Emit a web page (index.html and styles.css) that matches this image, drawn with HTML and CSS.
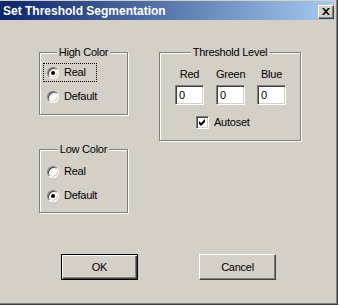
FILE: index.html
```html
<!DOCTYPE html>
<html lang="en">
<head>
    <meta charset="UTF-8">
    <title>Set Threshold Segmentation</title>
    <link rel="stylesheet" href="styles.css">
</head>
<body>
    <div class="window">
        <div class="titlebar">
            <span class="title">Set Threshold Segmentation</span>
            <span class="close">
                <svg width="8" height="7" viewBox="0 0 8 7">
                    <path d="M0 0h2l2 2.2 2-2.2h2l-3 3.5 3 3.5h-2l-2-2.2-2 2.2h-2l3-3.5z" fill="#000"/>
                </svg>
            </span>
        </div>

        <div class="content">
            <div class="left-col">
                <div class="group">
                    <div class="legend"><span>High Color</span></div>
                    <div class="option focus"><span class="radio checked"></span>Real</div>
                    <div class="option"><span class="radio"></span>Default</div>
                </div>
                <div class="group group-low">
                    <div class="legend"><span>Low Color</span></div>
                    <div class="option"><span class="radio"></span>Real</div>
                    <div class="option"><span class="radio checked"></span>Default</div>
                </div>
            </div>

            <div class="group thresh">
                <div class="legend"><span>Threshold Level</span></div>
                <div class="levels">
                    <span class="lvl-label">Red</span>
                    <span class="lvl-label">Green</span>
                    <span class="lvl-label">Blue</span>
                    <input class="field" type="text" value="0">
                    <input class="field" type="text" value="0">
                    <input class="field" type="text" value="0">
                </div>
                <div class="autoset">
                    <span class="checkbox">
                        <svg width="7" height="7" viewBox="0 0 7 7">
                            <path d="M0 2l2 2 4-4v3l-4 4-2-2z" fill="#000"/>
                        </svg>
                    </span>
                    Autoset
                </div>
            </div>
        </div>

        <div class="actions">
            <button class="btn btn-default">OK</button>
            <button class="btn">Cancel</button>
        </div>
    </div>
</body>
</html>
```

FILE: styles.css
```css
html, body {
    margin: 0;
    background: #fff;
}

body {
    font-family: "Liberation Sans", Arial, sans-serif;
    font-size: 11px;
    letter-spacing: -0.25px;
    color: #000;
}

.window {
    width: 338px;
    height: 305px;
    box-sizing: border-box;
    background: #d4d0c8;
    border-right: 1px solid #404040;
    border-bottom: 1px solid #404040;
    box-shadow: inset -1px -1px 0 #808080;
    padding-top: 1px;
}

.titlebar {
    width: 334px;
    height: 19px;
    box-sizing: border-box;
    padding-top: 2px;
    display: flex;
    justify-content: space-between;
    align-items: flex-start;
    background: linear-gradient(to right, #0a246a, #a6caf0);
}

.title {
    padding-left: 3px;
    color: #fff;
    font-size: 12px;
    font-weight: bold;
    line-height: 17px;
    letter-spacing: 0;
}

.close {
    width: 16px;
    height: 14px;
    margin-top: 2px;
    box-sizing: border-box;
    display: flex;
    align-items: center;
    justify-content: center;
    padding: 0 1px 1px 0;
    background: #d4d0c8;
    border: 1px solid;
    border-color: #fff #404040 #404040 #fff;
    box-shadow: inset -1px -1px 0 #808080;
}

.close svg {
    display: block;
}

.content {
    display: flex;
    gap: 31px;
    padding: 32px 0 0 39px;
}

.left-col {
    display: flex;
    flex-direction: column;
    gap: 34px;
}

.group {
    position: relative;
    width: 89px;
    height: 63px;
    box-sizing: border-box;
    padding: 10px 0 0 3px;
    border: 1px solid #808080;
    box-shadow: inset 1px 1px 0 #fff, 1px 1px 0 #fff;
    display: flex;
    flex-direction: column;
    gap: 5px;
}

.group-low {
    height: 64px;
    padding-top: 12px;
}

.legend {
    position: absolute;
    top: -7px;
    left: 0;
    right: 0;
    text-align: center;
    line-height: 13px;
}

.legend span {
    background: #d4d0c8;
    padding: 0 2px;
}

.option {
    width: 54px;
    height: 19px;
    box-sizing: border-box;
    padding-left: 3px;
    border: 1px dotted transparent;
    display: flex;
    align-items: center;
    gap: 5px;
    line-height: 13px;
}

.option.focus {
    border-color: #000;
}

.radio {
    position: relative;
    flex: none;
    width: 12px;
    height: 12px;
    box-sizing: border-box;
    border-radius: 50%;
    background: #fff;
    border: 1px solid;
    border-color: #808080 #fff #fff #808080;
    box-shadow: inset 1px 1px 0 #404040, inset -1px -1px 0 #d4d0c8;
}

.radio.checked::after {
    content: "";
    position: absolute;
    left: 3px;
    top: 3px;
    width: 4px;
    height: 4px;
    border-radius: 50%;
    background: #000;
}

.thresh {
    width: 142px;
    height: 89px;
    padding: 15px 0 0 0;
    gap: 0;
}

.levels {
    display: grid;
    grid-template-columns: repeat(3, 29px);
    column-gap: 12px;
    row-gap: 4px;
    padding-left: 15px;
}

.lvl-label {
    text-align: center;
    line-height: 13px;
    white-space: nowrap;
}

.field {
    width: 29px;
    height: 20px;
    box-sizing: border-box;
    margin: 0;
    padding: 0 3px;
    font: inherit;
    letter-spacing: inherit;
    color: #000;
    background: #fff;
    border: 1px solid;
    border-color: #808080 #fff #fff #808080;
    box-shadow: inset 1px 1px 0 #404040, inset -1px -1px 0 #d4d0c8;
    outline: none;
}

.autoset {
    display: flex;
    align-items: center;
    gap: 5px;
    margin-top: 11px;
    padding-left: 36px;
    line-height: 13px;
}

.checkbox {
    flex: none;
    width: 13px;
    height: 13px;
    box-sizing: border-box;
    display: flex;
    align-items: center;
    justify-content: center;
    background: #fff;
    border: 1px solid;
    border-color: #808080 #fff #fff #808080;
    box-shadow: inset 1px 1px 0 #404040, inset -1px -1px 0 #d4d0c8;
}

.checkbox svg {
    display: block;
}

.actions {
    display: flex;
    gap: 61px;
    margin-top: 41px;
    padding-left: 61px;
}

.btn {
    width: 77px;
    height: 26px;
    box-sizing: border-box;
    margin: 0;
    padding: 0;
    font: inherit;
    letter-spacing: inherit;
    color: #000;
    background: #d4d0c8;
    border: 1px solid;
    border-color: #fff #404040 #404040 #fff;
    box-shadow: inset -1px -1px 0 #808080;
    border-radius: 0;
}

.btn-default {
    border-color: #000;
    box-shadow: inset 1px 1px 0 #fff, inset -1px -1px 0 #404040, inset -2px -2px 0 #808080;
}
```
